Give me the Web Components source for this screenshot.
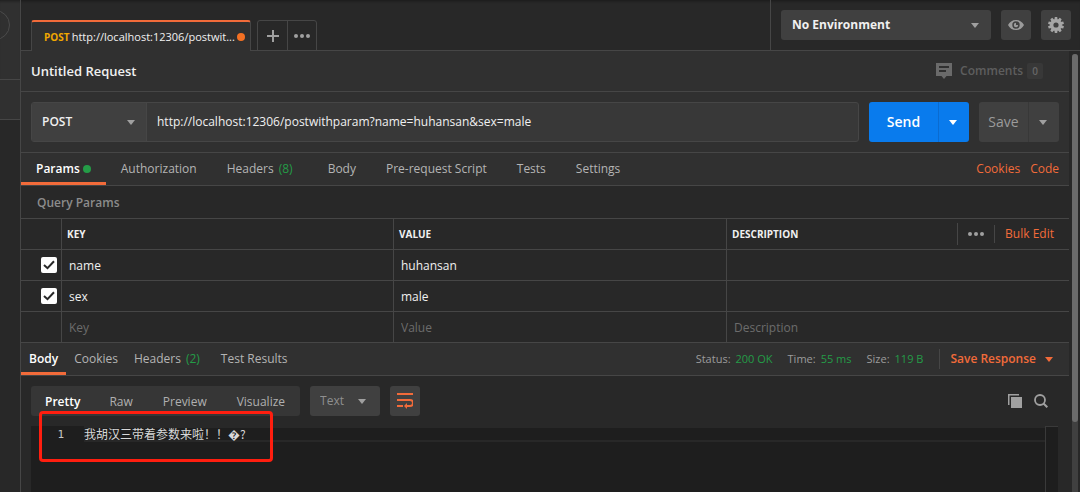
<!DOCTYPE html>
<html lang="en">
<head>
<meta charset="utf-8">
<meta name="viewport" content="width=device-width, initial-scale=1">
<title>Untitled Request</title>
<style>
  :root {
    --bg: #282828; --panel: #303030; --line: #464646; --control: #404040;
    --text: #f0f0f0; --muted: #a8a8a8; --faint: #808080;
    --orange: #f26b3a; --green: #249c47; --blue: #097bed;
  }
  body { margin: 0; background: var(--bg); color: var(--text); font: 12px/18px "Open Sans", "Noto Sans CJK SC", sans-serif; }
</style>
</head>
<body>
<api-client></api-client>
<script>
const BASE = `
  *, *::before, *::after { box-sizing: border-box; }
  :host([hidden]) { display: none; }
  button, input, select { font: inherit; color: inherit; background: none; border: 0; margin: 0; padding: 0; outline: 0; }
  button, select { cursor: pointer; }
  select { appearance: none; }
  a { text-decoration: none; color: var(--orange); }
  svg { display: block; flex: none; }
`;
function define(name, css, html, ready) {
  const tpl = document.createElement('template');
  tpl.innerHTML = `<style>${BASE}${css}</style>${html}`;
  customElements.define(name, class extends HTMLElement {
    constructor() {
      super();
      this.attachShadow({ mode: 'open' }).append(tpl.content.cloneNode(true));
    }
    connectedCallback() { if (ready) ready(this, this.shadowRoot); }
  });
}

define('caret-icon', `:host { display: block; pointer-events: none; color: #a0a0a0; }`,
  `<svg width="8" height="5" viewBox="0 0 8 5" aria-hidden="true"><path fill="currentColor" d="M0 0h8L4 5z"/></svg>`);

define('dots-icon', `:host { display: block; color: #a0a0a0; }`,
  `<svg width="16" height="4" viewBox="0 0 16 4" aria-hidden="true"><g fill="currentColor"><circle cx="2" cy="2" r="2"/><circle cx="8" cy="2" r="2"/><circle cx="14" cy="2" r="2"/></g></svg>`);

/* Drop-down: label, value and a caret laid over its right end */
define('drop-down', `
  :host { display: grid; grid-template-columns: 1fr; align-items: center; background: var(--control); border-radius: 3px; height: 30px; }
  select { grid-area: 1 / 1; width: 100%; height: 100%; padding-left: var(--pad, 10px); }
  caret-icon { grid-area: 1 / 1; justify-self: end; margin-right: var(--caret, 12px); }
`, `<select><option></option></select><caret-icon></caret-icon>`, (el, root) => {
  root.querySelector('select').setAttribute('aria-label', el.getAttribute('label'));
  root.querySelector('option').textContent = el.getAttribute('value');
});

define('side-rail', `
  :host { display: flex; flex-direction: column; border-right: 1px solid var(--line); overflow: hidden; }
  div { background: var(--panel); border-bottom: 1px solid var(--line); }
  .top { height: 80px; padding-top: 10px; display: flex; justify-content: flex-end; align-items: flex-start; padding-right: 10px; box-shadow: inset 0 3px 3px -2px #1c1c1c; }
  .low { height: 40px; }
  button { flex: none; width: 30px; height: 30px; border-radius: 15px; border: 1px solid #4b4b4b; }
`, `<div class="top"><button aria-label="Collapse"></button></div><div class="low"></div>`);

define('request-tabs', `
  :host { display: flex; height: 51px; box-shadow: inset 0 3px 3px -2px #1a1a1a; }
  .strip { flex: 1; min-width: 0; display: flex; align-items: flex-end; padding-left: 10px; border-bottom: 1px solid var(--line); }
  .tab { width: 220px; height: 31px; margin-bottom: -1px; background: var(--panel); border: 1px solid var(--line); border-top: 2px solid var(--orange); border-bottom: 0; border-radius: 3px 3px 0 0; padding: 0 5px 0 12px; display: flex; align-items: center; justify-content: space-between; }
  .method { color: #f0a800; font-size: 10px; font-weight: 700; }
  .url { white-space: nowrap; font-size: 11px; }
  .dot { width: 8px; height: 8px; border-radius: 4px; background: #f47023; flex: none; }
  .tools { display: flex; margin-left: 6px; height: 31px; margin-bottom: -1px; border: 1px solid var(--line); border-radius: 3px 3px 0 0; }
  .tools button { width: 28px; display: grid; place-items: center; }
  .tools button:first-child { width: 30px; border-right: 1px solid var(--line); }
  .env { display: flex; gap: 10px; padding: 10px 9px 0 10px; border-left: 1px solid var(--line); border-bottom: 1px solid var(--line); }
  drop-down { width: 210px; font-weight: 700; --pad: 11px; }
  .env button { width: 30px; height: 30px; border-radius: 3px; background: var(--control); display: grid; place-items: center; }
`, `
  <div class="strip">
    <button class="tab"><span class="method">POST</span><span class="url">http://localhost:12306/postwit...</span><span class="dot"></span></button>
    <div class="tools">
      <button aria-label="New tab"><svg width="12" height="12" viewBox="0 0 12 12"><path d="M6 0v12M0 6h12" stroke="#a0a0a0" stroke-width="2"/></svg></button>
      <button aria-label="Tab actions"><dots-icon></dots-icon></button>
    </div>
  </div>
  <div class="env">
    <drop-down label="Environment" value="No Environment"></drop-down>
    <button aria-label="Environment quick look"><svg width="16" height="10" viewBox="0 0 16 10"><path fill="#9b9b9b" fill-rule="evenodd" d="M8 0c3.700 0 6.500 2 8 5-1.500 3-4.300 5-8 5S1.500 8 0 5c1.500-3 4.300-5 8-5zm0 1.300a3.700 3.700 0 1 0 0 7.400 3.700 3.700 0 0 0 0-7.400z"/><path fill="#9b9b9b" d="M8 2.800A2.200 2.200 0 1 0 10.200 5H8z"/></svg></button>
    <button aria-label="Settings"><svg width="16" height="16" viewBox="0 0 16 16"><g fill="#a6a6a6"><path fill-rule="evenodd" d="M8 2a6 6 0 1 0 0 12A6 6 0 0 0 8 2zm0 3.400a2.600 2.600 0 1 1 0 5.200 2.600 2.600 0 0 1 0-5.200z"/><path d="M6.800 0h2.400l.4 3H6.400zM6.400 13h3.200l-.4 3H6.800z"/><path transform="rotate(36 8 8)" d="M6.800 0h2.400l.4 3H6.400zM6.400 13h3.200l-.4 3H6.800z"/><path transform="rotate(72 8 8)" d="M6.800 0h2.400l.4 3H6.400zM6.400 13h3.200l-.4 3H6.800z"/><path transform="rotate(108 8 8)" d="M6.800 0h2.400l.4 3H6.400zM6.400 13h3.200l-.4 3H6.800z"/><path transform="rotate(144 8 8)" d="M6.800 0h2.400l.4 3H6.400zM6.400 13h3.200l-.4 3H6.800z"/></g></svg></button>
  </div>`);

define('request-title', `
  :host { display: flex; align-items: center; height: 41px; padding: 0 26px 0 10px; background: var(--panel); border-bottom: 1px solid var(--line); }
  h1 { margin: 0; flex: 1; font-size: 13px; font-weight: 600; }
  button { display: flex; align-items: center; color: #5e5e5e; font-weight: 600; }
  svg { margin-right: 8px; }
  .n { margin-left: 4px; width: 16px; height: 16px; border-radius: 2px; background: #383838; font-size: 10px; line-height: 16px; color: #666; }
`, `
  <h1>Untitled Request</h1>
  <button><svg width="16" height="16" viewBox="0 0 16 16"><path fill="#6a6a6a" fill-rule="evenodd" d="M0 0h16v13h-5.500L8 16l-2.500-3H0zm3 3v2h10V3zm0 4v2h7V7z"/></svg>Comments<span class="n">0</span></button>`);

define('request-line', `
  :host { display: flex; gap: 10px; padding: 10px; background: var(--panel); border-bottom: 1px solid var(--line); }
  .url { flex: 1; min-width: 0; display: flex; height: 40px; border: 1px solid var(--line); border-radius: 3px; background: #383838; }
  drop-down { width: 114px; height: 100%; border-radius: 2px 0 0 2px; font-weight: 600; --pad: 10px; --caret: 11px; }
  input { flex: 1; min-width: 0; padding: 0 10px; border-left: 1px solid var(--line); font-size: 12px; }
  .split { display: flex; height: 40px; border-radius: 3px; overflow: hidden; font-size: 14px; font-weight: 600; background: var(--control); color: #9b9b9b; }
  .split button + button { width: 31px; display: grid; align-items: center; padding-left: 10px; border-left: 1px solid #383838; }
  .send { background: var(--blue); color: #fff; }
  .send caret-icon { color: #fff; }
  .send button:first-child { width: 69px; }
  .send button + button { border-color: #0a6bd0; }
  .save { font-weight: 400; }
  .save button:first-child { width: 49px; }
`, `
  <div class="url"><drop-down label="Method" value="POST"></drop-down><input aria-label="Request URL" value="http://localhost:12306/postwithparam?name=huhansan&amp;sex=male"></div>
  <div class="split send"><button>Send</button><button aria-label="Send options"><caret-icon></caret-icon></button></div>
  <div class="split save"><button>Save</button><button aria-label="Save options"><caret-icon></caret-icon></button></div>`);

define('tab-row', `
  :host { display: flex; justify-content: space-between; height: 33px; background: var(--panel); border-bottom: 1px solid var(--line); }
  nav { display: flex; }
  .end { display: flex; align-items: center; }
`, `<nav role="tablist"><slot></slot></nav><div class="end"><slot name="end"></slot></div>`);

define('tab-item', `
  :host { display: block; color: #b4b4b4; }
  button { height: 32px; padding: 0 var(--tab-pad, 15px); border-bottom: 3px solid transparent; padding-top: 3px; display: flex; align-items: center; white-space: nowrap; }
  :host([active]) { color: #fff; font-weight: 600; }
  :host([active]) button { border-color: var(--orange); }
`, `<button role="tab"><slot></slot></button>`);

define('params-table', `
  :host { display: block; background: var(--bg); }
  h2 { margin: 0; height: 33px; padding: 0 16px; font-size: 12px; line-height: 33px; font-weight: 600; color: #8c8c8c; border-bottom: 1px solid var(--line); }
  table { display: block; }
  thead, tbody { display: block; }
  tr { display: grid; grid-template-columns: 41px 332fr 333fr 342fr; height: 31px; border-bottom: 1px solid var(--line); }
  th, td { padding: 0; min-width: 0; display: flex; align-items: center; border-right: 1px solid var(--line); }
  th:last-child, td:last-child { border-right: 0; }
  th { font-size: 10px; font-weight: 700; padding-left: 5px; justify-content: flex-start; }
  td:first-child { justify-content: flex-end; padding-right: 4px; }
  td > input { width: 100%; height: 100%; padding: 0 7px; }
  input::placeholder { color: #6c6c6c; opacity: 1; }
  .tick { display: grid; }
  .tick input { grid-area: 1 / 1; appearance: none; width: 16px; height: 16px; background: #fff; border-radius: 2px; }
  .tick svg { grid-area: 1 / 1; place-self: center; pointer-events: none; }
  .acts { margin-left: auto; display: flex; align-items: center; font-size: 12px; font-weight: 400; padding-right: 15px; }
  .acts button { height: 22px; padding: 0 10px; border-left: 1px solid var(--line); }
  .acts a { border-left: 1px solid var(--line); padding-left: 10px; }
`, `
  <h2>Query Params</h2>
  <table>
    <thead><tr><th></th><th scope="col">KEY</th><th scope="col">VALUE</th><th scope="col">DESCRIPTION<span class="acts"><button aria-label="Column options"><dots-icon></dots-icon></button><a href="#bulk">Bulk Edit</a></span></th></tr></thead>
    <tbody></tbody>
  </table>`, (el, root) => {
  const body = root.querySelector('tbody');
  for (const [key, value] of [['name', 'huhansan'], ['sex', 'male'], []]) {
    const tr = document.createElement('tr');
    const tick = key ? `<label class="tick"><input type="checkbox" checked aria-label="Use ${key}"><svg width="12" height="10" viewBox="0 0 12 10"><path d="M1 5l3.500 3.200L11 1.200" fill="none" stroke="#282828" stroke-width="2"/></svg></label>` : '';
    const box = (label, v) => `<td><input aria-label="${label}" ${v ? `value="${v}"` : key ? '' : `placeholder="${label}"`}></td>`;
    tr.innerHTML = `<td>${tick}</td>${box('Key', key)}${box('Value', value)}${box('Description')}`;
    body.append(tr);
  }
});

define('response-stats', `
  :host { display: flex; align-items: center; font-size: 11px; color: #9c9c9c; }
  dl { display: flex; gap: 15px; margin: 0 16px 0 0; }
  dl div { display: flex; gap: 5px; }
  dd { margin: 0; color: var(--green); }
  button { display: flex; align-items: center; gap: 9px; height: 20px; padding: 0 16px 0 10px; border-left: 1px solid var(--line); color: var(--orange); font-size: 12px; font-weight: 600; }
  caret-icon { color: var(--orange); }
`, `
  <dl><div><dt>Status:</dt><dd>200 OK</dd></div><div><dt>Time:</dt><dd>55 ms</dd></div><div><dt>Size:</dt><dd>119 B</dd></div></dl>
  <button>Save Response<caret-icon></caret-icon></button>`);

define('response-tools', `
  :host { display: flex; gap: 10px; padding: 10px 21px 10px 10px; align-items: center; }
  .modes { display: flex; height: 30px; border-radius: 3px; background: #363636; color: #b0b0b0; }
  .modes button { padding: 2px 15px 0; }
  .modes .on { color: #fff; font-weight: 600; padding: 2px 14px 0; }
  drop-down { width: 70px; color: #8f8f8f; --caret: 14px; }
  .wrap { width: 30px; height: 30px; border-radius: 3px; background: var(--control); display: grid; place-items: center; }
  .right { margin-left: auto; display: flex; gap: 12px; align-items: center; }
`, `
  <div class="modes"><button class="on">Pretty</button><button>Raw</button><button>Preview</button><button>Visualize</button></div>
  <drop-down label="Format" value="Text"></drop-down>
  <button class="wrap" aria-label="Wrap lines"><svg width="16" height="16" viewBox="0 0 16 16"><path d="M0 1h16M0 7h13a3 3 0 0 1 0 6H9M0 13h6" fill="none" stroke="#f26b3a" stroke-width="2"/><path fill="#f26b3a" d="M10 10v6l-3-3z"/></svg></button>
  <div class="right">
    <button aria-label="Copy"><svg width="14" height="14" viewBox="0 0 14 14"><path fill="#a0a0a0" d="M3 3h11v11H3zM0 0h11v1.500H1.500V11H0z"/></svg></button>
    <button aria-label="Search"><svg width="14" height="14" viewBox="0 0 14 14"><circle cx="6" cy="6" r="5" fill="none" stroke="#a0a0a0" stroke-width="1.800"/><path d="M9.500 9.500L13.300 13.300" stroke="#a0a0a0" stroke-width="2"/></svg></button>
  </div>`);

define('code-view', `
  :host { flex: 1; display: flex; margin: 0 11px 0 10px; background: #1e1e1e; font-size: 12px; line-height: 16px; color: #d8d8d8; }
  .gutter { width: 53px; padding-right: 20px; text-align: right; font-family: "DejaVu Sans Mono", monospace; font-size: 11px; line-height: 18px; color: #c6c6c6; }
  .code { flex: 1; min-width: 0; }
  .line { height: 16px; border-top: 2px solid var(--bg); border-bottom: 2px solid var(--bg); display: flex; align-items: center; white-space: pre; font-family: "Noto Sans CJK SC", sans-serif; }
  .map { width: 13px; border-left: 1px solid #3a3a3a; border-top: 1px solid #3a3a3a; }
`, `<div class="gutter">1</div><div class="code"><div class="line">我胡汉三带着参数来啦！！\uFFFD?</div></div><div class="map"></div>`);

define('response-pane', `
  :host { position: relative; flex: 1; display: flex; flex-direction: column; min-height: 0; }
  .mark { position: absolute; left: 18px; top: 35px; width: 234px; height: 51px; border: 3px solid #ff1e0f; border-radius: 4px; pointer-events: none; }
`, `<response-tools></response-tools><code-view></code-view><div class="mark"></div>`);

define('scroll-track', `
  :host { display: block; padding: 3px 2px 0 3px; background: var(--bg); }
  .track { height: 100%; background: #404040; border-radius: 3px 3px 0 0; }
  .thumb { height: 84%; background: #6b6b6b; border-radius: 3px; }
`, `<div class="track"><div class="thumb"></div></div>`);

define('api-client', `
  :host { display: grid; grid-template-columns: 21px 1fr; min-height: 100vh; }
  main { display: flex; flex-direction: column; min-width: 0; }
  .work { flex: 1; display: grid; grid-template-columns: 1fr 11px; }
  .col { display: flex; flex-direction: column; min-width: 0; }
  .dot { width: 8px; height: 8px; border-radius: 4px; background: var(--green); margin-left: 3px; }
  .n { color: var(--green); margin: 0 5px; }
  .links { display: flex; gap: 10px; padding-right: 10px; }
  .resp { --tab-pad: 8px; }
`, `
  <side-rail></side-rail>
  <main>
    <request-tabs></request-tabs>
    <div class="work">
      <div class="col">
        <request-title></request-title>
        <request-line></request-line>
        <tab-row>
          <tab-item active>Params<span class="dot"></span></tab-item><tab-item>Authorization</tab-item><tab-item>Headers<span class="n">(8)</span></tab-item><tab-item>Body</tab-item><tab-item>Pre-request Script</tab-item><tab-item>Tests</tab-item><tab-item>Settings</tab-item>
          <div class="links" slot="end"><a href="#cookies">Cookies</a><a href="#code">Code</a></div>
        </tab-row>
        <params-table></params-table>
        <tab-row class="resp">
          <tab-item active>Body</tab-item><tab-item>Cookies</tab-item><tab-item>Headers<span class="n">(2)</span></tab-item><tab-item>Test Results</tab-item>
          <response-stats slot="end"></response-stats>
        </tab-row>
        <response-pane></response-pane>
      </div>
      <scroll-track></scroll-track>
    </div>
  </main>`);
</script>
</body>
</html>
